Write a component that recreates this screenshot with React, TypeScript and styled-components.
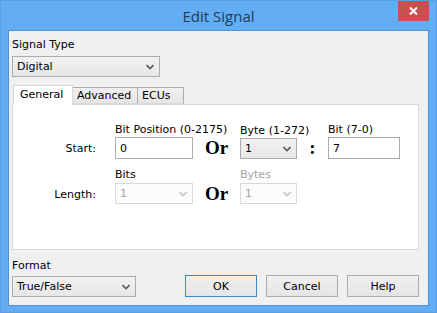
import styled, { createGlobalStyle } from 'styled-components'

const GlobalStyle = createGlobalStyle`
	html, body {
		margin: 0;
		padding: 0;
		background: #62adf3;
	}
	body {
		font-family: 'DejaVu Sans', Tahoma, sans-serif;
		font-size: 11px;
		color: #000;
	}
`

const Window = styled.div`
	width: 437px;
	height: 313px;
	box-sizing: border-box;
	background: #62adf3;
	border: 1px solid #5a9fe0;
	padding: 0 7px 6px 7px;
	display: flex;
	flex-direction: column;
`

const TitleBar = styled.div`
	height: 29px;
	display: grid;
	grid-template-columns: 32px 1fr 32px;
	align-items: start;
`

const Title = styled.div`
	grid-column: 2;
	align-self: center;
	text-align: center;
	font-family: 'Open Sans', 'Noto Sans', sans-serif;
	font-size: 15px;
	color: #1e3a5c;
	padding-top: 1px;
`

const CloseButton = styled.div`
	grid-column: 3;
	height: 20px;
	width: 31px;
	margin-left: 1px;
	background: #c75050;
	display: flex;
	align-items: center;
	justify-content: center;
`

const Client = styled.div`
	flex: 1;
	background: #f0f0f0;
	border: 1px solid #4f92d6;
	padding: 7px 9px 6px 3px;
	display: flex;
	flex-direction: column;
`

const FieldLabel = styled.div<{ $disabled?: boolean }>`
	line-height: 14px;
	height: 14px;
	color: ${p => (p.$disabled ? '#a3a3a3' : '#000')};
	white-space: nowrap;
`

const LabeledField = styled.div<{ $width?: number; $gap?: number }>`
	display: flex;
	flex-direction: column;
	gap: ${p => p.$gap ?? 0}px;
	width: ${p => (p.$width ? `${p.$width}px` : 'auto')};
`

const Combo = styled.div<{ $width: number; $disabled?: boolean }>`
	width: ${p => p.$width}px;
	height: 21px;
	box-sizing: border-box;
	border: 1px solid ${p => (p.$disabled ? '#d9d9d9' : '#acacac')};
	background: ${p => (p.$disabled ? '#fcfcfc' : 'linear-gradient(#f2f2f2, #e7e7e7)')};
	color: ${p => (p.$disabled ? '#a3a3a3' : '#000')};
	display: flex;
	align-items: center;
	justify-content: space-between;
	padding: 0 5px 0 4px;
	line-height: 14px;
`

const TextBox = styled.div<{ $width: number }>`
	width: ${p => p.$width}px;
	height: 22px;
	box-sizing: border-box;
	border: 1px solid #abadb3;
	background: #fff;
	display: flex;
	align-items: center;
	padding: 1px 4px 0;
`

const TabStrip = styled.div`
	display: flex;
	align-items: flex-end;
	height: 19px;
	margin-top: 8px;
	padding-left: 1px;
	position: relative;
	z-index: 1;
`

const Tab = styled.div<{ $active?: boolean; $width: number }>`
	width: ${p => p.$width}px;
	box-sizing: border-box;
	height: ${p => (p.$active ? 20 : 17)}px;
	margin-bottom: ${p => (p.$active ? -1 : 0)}px;
	border: 1px solid ${p => (p.$active ? '#d9d9d9' : '#acacac')};
	border-bottom: ${p => (p.$active ? 'none' : '1px solid #d9d9d9')};
	border-left-width: ${p => (p.$active ? 1 : 0)}px;
	background: ${p => (p.$active ? '#fff' : 'linear-gradient(#f0f0f0, #e5e5e5)')};
	padding-left: ${p => (p.$active ? 6 : 4)}px;
	padding-top: ${p => (p.$active ? 2 : 1)}px;
	line-height: 14px;
`

const TabPanel = styled.div`
	height: 146px;
	box-sizing: border-box;
	border: 1px solid #d9d9d9;
	background: #fff;
	padding-top: 18px;
	display: flex;
	flex-direction: column;
	gap: 9px;
`

const PanelRow = styled.div`
	display: flex;
	align-items: flex-end;
`

const RowLabel = styled.div<{ $height: number }>`
	width: 83px;
	margin-right: 19px;
	height: ${p => p.$height}px;
	display: flex;
	align-items: center;
	justify-content: flex-end;
	padding-top: 1px;
	box-sizing: border-box;
`

const Separator = styled.div<{ $width: number; $height: number }>`
	width: ${p => p.$width}px;
	height: ${p => p.$height}px;
	display: flex;
	align-items: center;
	justify-content: center;
	font-family: 'Liberation Serif', 'Times New Roman', serif;
	font-weight: bold;
	font-size: 19px;
	line-height: 20px;
`

const BottomArea = styled.div`
	margin-top: 9px;
	display: flex;
	align-items: flex-end;
	justify-content: space-between;
`

const ButtonRow = styled.div`
	display: flex;
	gap: 9px;
`

const Button = styled.div<{ $default?: boolean }>`
	width: 72px;
	height: 22px;
	box-sizing: border-box;
	border: 1px solid ${p => (p.$default ? '#3c88d0' : '#acacac')};
	background: linear-gradient(#f0f0f0, #e5e5e5);
	display: flex;
	align-items: center;
	justify-content: center;
	padding-top: 1px;
`

function Chevron({ color = '#5a5a5a' }: { color?: string }) {
	return (
		<svg width="8" height="6" viewBox="0 0 8 6">
			<path d="M0.5 1 L4 4.5 L7.5 1" fill="none" stroke={color} strokeWidth="1.6" />
		</svg>
	)
}

function Select({ value, width, disabled }: { value: string; width: number; disabled?: boolean }) {
	return (
		<Combo $width={width} $disabled={disabled}>
			<span>{value}</span>
			<Chevron color={disabled ? '#c4c4c4' : '#5a5a5a'} />
		</Combo>
	)
}

export default function App() {
	return (
		<>
			<GlobalStyle />
			<Window>
				<TitleBar>
					<Title>Edit Signal</Title>
					<CloseButton>
						<svg width="9" height="8" viewBox="0 0 9 8">
							<path d="M1 0.5 L8 7.5 M8 0.5 L1 7.5" stroke="#fff" strokeWidth="2" />
						</svg>
					</CloseButton>
				</TitleBar>

				<Client>
					<LabeledField $gap={4}>
						<FieldLabel>Signal Type</FieldLabel>
						<Select value="Digital" width={148} />
					</LabeledField>

					<TabStrip>
						<Tab $active $width={60}>General</Tab>
						<Tab $width={65}>Advanced</Tab>
						<Tab $width={46}>ECUs</Tab>
					</TabStrip>

					<TabPanel>
						<PanelRow>
							<RowLabel $height={22}>Start:</RowLabel>
							<LabeledField $width={78}>
								<FieldLabel>Bit Position (0-2175)</FieldLabel>
								<TextBox $width={78}>0</TextBox>
							</LabeledField>
							<Separator $width={47} $height={22}>Or</Separator>
							<LabeledField $width={57}>
								<FieldLabel>Byte (1-272)</FieldLabel>
								<Select value="1" width={57} />
							</LabeledField>
							<Separator $width={31} $height={22}>:</Separator>
							<LabeledField $width={72}>
								<FieldLabel>Bit (7-0)</FieldLabel>
								<TextBox $width={72}>7</TextBox>
							</LabeledField>
						</PanelRow>

						<PanelRow>
							<RowLabel $height={21}>Length:</RowLabel>
							<LabeledField $width={78} $gap={1}>
								<FieldLabel>Bits</FieldLabel>
								<Select value="1" width={78} disabled />
							</LabeledField>
							<Separator $width={47} $height={21}>Or</Separator>
							<LabeledField $width={57} $gap={1}>
								<FieldLabel $disabled>Bytes</FieldLabel>
								<Select value="1" width={57} disabled />
							</LabeledField>
						</PanelRow>
					</TabPanel>

					<BottomArea>
						<LabeledField $gap={3}>
							<FieldLabel>Format</FieldLabel>
							<Select value="True/False" width={124} />
						</LabeledField>
						<ButtonRow>
							<Button $default>OK</Button>
							<Button>Cancel</Button>
							<Button>Help</Button>
						</ButtonRow>
					</BottomArea>
				</Client>
			</Window>
		</>
	)
}
